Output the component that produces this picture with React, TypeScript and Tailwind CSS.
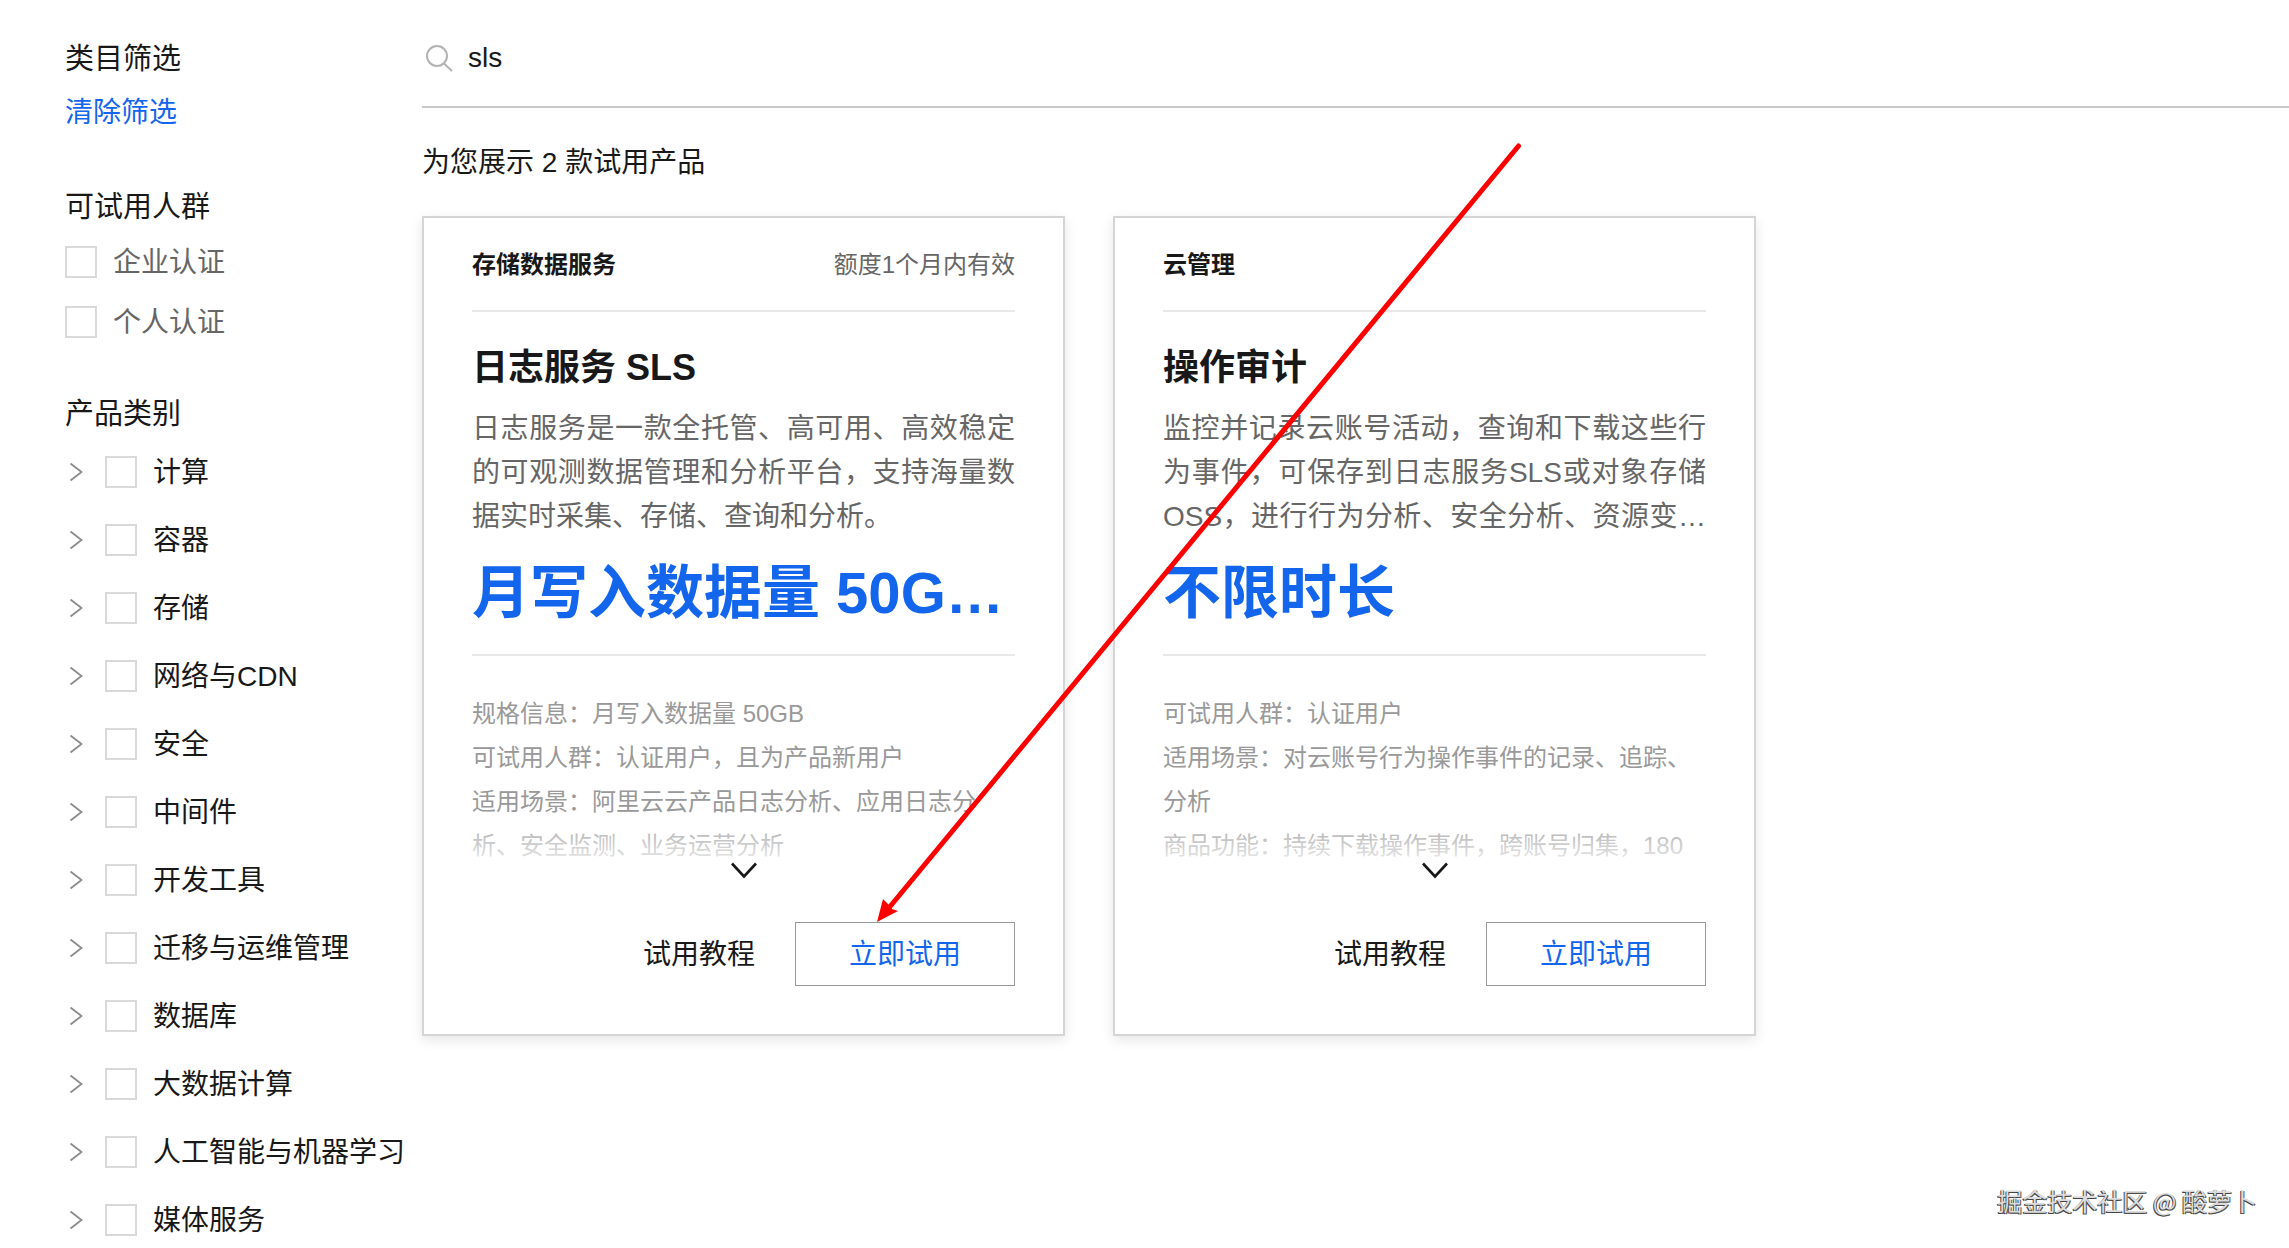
import { useState } from 'react'

interface Product {
  category: string;
  validity?: string;
  name: string;
  desc: string;
  quota: string;
  details: string[];
}

const audiences = ['企业认证', '个人认证']

const categories = [
  '计算',
  '容器',
  '存储',
  '网络与CDN',
  '安全',
  '中间件',
  '开发工具',
  '迁移与运维管理',
  '数据库',
  '大数据计算',
  '人工智能与机器学习',
  '媒体服务'
]

const products: Product[] = [
  {
    category: '存储数据服务',
    validity: '额度1个月内有效',
    name: '日志服务 SLS',
    desc: '日志服务是一款全托管、高可用、高效稳定的可观测数据管理和分析平台，支持海量数据实时采集、存储、查询和分析。',
    quota: '月写入数据量 50GB/月',
    details: [
      '规格信息：月写入数据量 50GB',
      '可试用人群：认证用户，且为产品新用户',
      '适用场景：阿里云云产品日志分析、应用日志分析、安全监测、业务运营分析'
    ]
  },
  {
    category: '云管理',
    name: '操作审计',
    desc: '监控并记录云账号活动，查询和下载这些行为事件，可保存到日志服务SLS或对象存储OSS，进行行为分析、安全分析、资源变更追踪和合规性审计。',
    quota: '不限时长',
    details: [
      '可试用人群：认证用户',
      '适用场景：对云账号行为操作事件的记录、追踪、分析',
      '商品功能：持续下载操作事件，跨账号归集，180 天事件查询'
    ]
  }
]

function Checkbox({ id }: { id: string }) {
  return (
    <input
      id={id}
      type="checkbox"
      className="size-8 shrink-0 appearance-none border-2 border-[#d9d9d9] bg-white checked:bg-[#1366ec]"
    />
  )
}

function Sidebar() {
  return (
    <aside className="w-[422px] shrink-0 pl-[65px] pt-[39px]">
      <h2 className="text-[29px] leading-10">类目筛选</h2>
      <button className="mt-[14px] block text-[28px] leading-10 text-[#1366ec]">清除筛选</button>

      <h2 className="mt-[54px] text-[29px] leading-10">可试用人群</h2>
      <ul className="mt-[19px] flex flex-col gap-7">
        {audiences.map((item, i) => (
          <li key={item} className="flex h-8 items-center gap-4">
            <Checkbox id={`audience-${i}`} />
            <label htmlFor={`audience-${i}`} className="pt-[2px] text-[28px] leading-8 text-[#666]">{item}</label>
          </li>
        ))}
      </ul>

      <h2 className="mt-14 text-[29px] leading-10">产品类别</h2>
      <ul className="mt-[22px] flex flex-col gap-9">
        {categories.map((item, i) => (
          <li key={item} className="flex h-8 items-center">
            <button aria-label={`展开${item}`} className="w-10">
              <svg width="24" height="24" viewBox="0 0 24 24" fill="none" stroke="#8c8c8c" strokeWidth="1.8">
                <path d="M5.5 3.5 16.5 12 5.5 20.5" />
              </svg>
            </button>
            <Checkbox id={`category-${i}`} />
            <label htmlFor={`category-${i}`} className="ml-4 whitespace-nowrap pt-[2px] text-[28px] leading-8">{item}</label>
          </li>
        ))}
      </ul>
    </aside>
  )
}

function ProductCard({ product }: { product: Product }) {
  return (
    <article className="w-[643px] border-2 border-[#d5d5d5] bg-white p-12 pt-0 shadow-[0_4px_12px_rgba(0,0,0,0.1)]">
      <header className="flex h-[94px] items-center justify-between border-b-2 border-[#e8e8e8] pt-[2px] text-[24px] leading-8">
        <span className="font-bold">{product.category}</span>
        {product.validity && <span className="text-[#666]">{product.validity}</span>}
      </header>

      <h3 className="mt-[30px] text-[36px] font-bold leading-[52px]">{product.name}</h3>
      <p className="mt-[13px] line-clamp-3 text-justify text-[28px] leading-[44px] text-[#666]">{product.desc}</p>
      <p className="mt-4 truncate text-[58px] font-bold leading-[76px] text-[#1366ec]">{product.quota}</p>

      {/* Spec list, faded out at the fold */}
      <div className="relative mt-[23px] border-t-2 border-[#e8e8e8] pt-9">
        <div className="h-[170px] overflow-hidden text-[24px] leading-[44px] text-[#999]">
          {product.details.map(line => (
            <p key={line}>{line}</p>
          ))}
        </div>
        <div className="absolute inset-x-0 bottom-0 h-10 bg-linear-to-b from-white/15 to-white/80" />
      </div>
      <button aria-label="展开" className="mx-auto block h-[18px]">
        <svg width="30" height="18" viewBox="0 0 30 18" fill="none" stroke="#181818" strokeWidth="2.6">
          <path d="M3 1.5 15 14.5 27 1.5" />
        </svg>
      </button>

      <footer className="mt-[42px] flex items-center justify-end gap-10 text-[28px]">
        <a href="#tutorial" className="pt-[2px]">试用教程</a>
        <button className="h-16 w-[220px] border border-[#999] pt-[2px] text-[#1366ec]">立即试用</button>
      </footer>
    </article>
  )
}

export default function App() {
  const [keyword, setKeyword] = useState('sls')

  return (
    <div className="relative flex min-h-screen overflow-hidden bg-white font-['Liberation_Sans','Noto_Sans_CJK_SC',sans-serif] text-[#181818]">
      <Sidebar />

      <main className="min-w-0 flex-1">
        <div className="flex h-[108px] items-center border-b-2 border-[#c8c8c8] pt-[10px]">
          <svg className="ml-1 shrink-0" width="28" height="28" viewBox="0 0 28 28" fill="none" stroke="#b3b3b3" strokeWidth="2">
            <circle cx="11" cy="12" r="10" />
            <path d="M18 19.5 26 27" />
          </svg>
          <input
            aria-label="搜索"
            value={keyword}
            onChange={e => setKeyword(e.target.value)}
            className="ml-[14px] min-w-0 flex-1 bg-transparent text-[28px] leading-10 outline-none"
          />
        </div>

        <p className="mt-[35px] text-[28px] leading-10">为您展示 2 款试用产品</p>

        <div className="mt-[33px] flex flex-wrap items-start gap-12">
          {products.map(product => (
            <ProductCard key={product.name} product={product} />
          ))}
        </div>
      </main>

      {/* Pointer to the trial button */}
      <svg className="pointer-events-none absolute left-[870px] top-[140px]" width="660" height="790" viewBox="870 140 660 790">
        <path d="M1518.5 146 888 909" stroke="#f00" strokeWidth="5" strokeLinecap="round" />
        <path d="M877 922 883 899 889 905 892 909 898 911Z" fill="#f00" />
      </svg>

      <div className="absolute bottom-8 right-8 font-['Noto_Sans_CJK_SC',sans-serif] text-[25px] leading-8 text-[#dcdcdc] [text-shadow:-1px_1px_0_#444,1px_1px_0_#555]">
        掘金技术社区 @ 酸萝卜
      </div>
    </div>
  )
}
